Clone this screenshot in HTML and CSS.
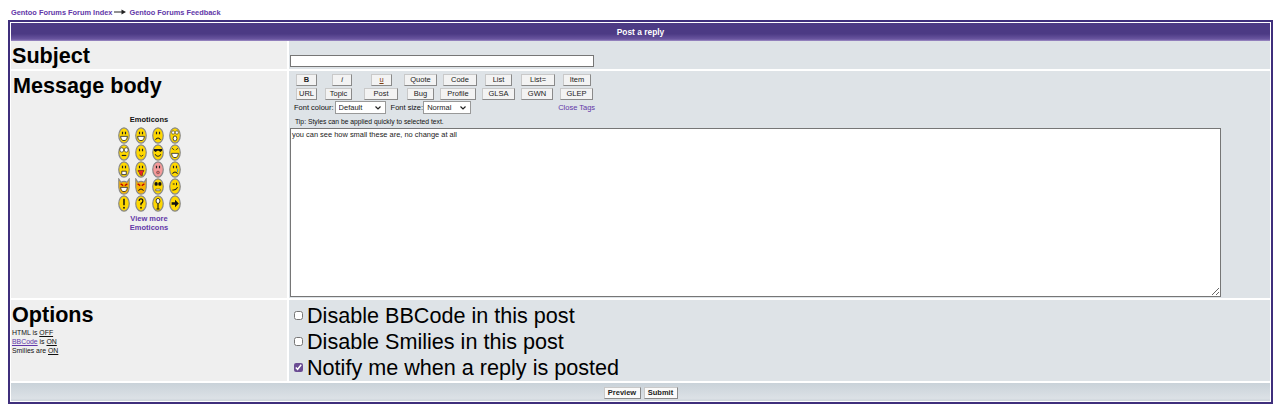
FILE: index.html
```html
<!DOCTYPE html>
<html lang="en">
<head>
<meta charset="UTF-8">
<title>Gentoo Forums :: Post a reply</title>
<link rel="stylesheet" href="styles.css">
</head>
<body>
<svg class="sprites" width="0" height="0">
    <symbol id="face" viewBox="0 0 16 20">
        <ellipse cx="8" cy="10" rx="7" ry="9" fill="#ffd800" stroke="#888" stroke-width="1.6"/>
    </symbol>
    <symbol id="pink" viewBox="0 0 16 20">
        <ellipse cx="8" cy="10" rx="7" ry="9" fill="#f49a9a" stroke="#888" stroke-width="1.6"/>
    </symbol>
    <symbol id="devil" viewBox="0 0 16 20">
        <path d="M1 1 L4 5 Q8 3 12 5 L15 1 L15 11 Q14 19 8 19 Q2 19 1 11 Z" fill="#f7b500" stroke="#888" stroke-width="1.4"/>
    </symbol>
    <symbol id="eyes" viewBox="0 0 16 20">
        <path d="M6 5.5 V8.5 M10 5.5 V8.5" stroke="#222" stroke-width="1.6"/>
    </symbol>
    <symbol id="grin" viewBox="0 0 16 20">
        <path d="M3.5 11 H12.5 Q12 16 8 16 Q4 16 3.5 11 Z" fill="#fff" stroke="#222"/>
    </symbol>
    <symbol id="sad" viewBox="0 0 16 20">
        <path d="M4.5 15 Q8 11 11.5 15" fill="none" stroke="#222" stroke-width="1.2"/>
    </symbol>
    <symbol id="smile" viewBox="0 0 16 20">
        <path d="M4 12 Q8 17 12 12" fill="none" stroke="#222" stroke-width="1.2"/>
    </symbol>
</svg>

<div class="crumbs">
    <a href="#">Gentoo Forums Forum Index</a>
    <svg class="crumb-arrow" width="12" height="6" viewBox="0 0 12 6"><path d="M0 3 H8" stroke="#222" stroke-width="1"/><path d="M7.5 0.5 L12 3 L7.5 5.5 Z" fill="#222"/></svg>
    <a href="#">Gentoo Forums Feedback</a>
</div>

<form class="forumline">
    <div class="title-bar">Post a reply</div>

    <div class="row row-subject">
        <div class="label-cell"><span class="big-label">Subject</span></div>
        <div class="field-cell subject-cell"><input class="subject-input" type="text"></div>
    </div>

    <div class="row row-message">
        <div class="label-cell">
            <span class="big-label">Message body</span>
            <div class="smilies">
                <div class="smilies-title">Emoticons</div>
                <div class="smilies-grid">
                    <svg viewBox="0 0 16 20" preserveAspectRatio="none"><use href="#face"/><use href="#eyes"/><use href="#grin"/></svg>
                    <svg viewBox="0 0 16 20" preserveAspectRatio="none"><use href="#face"/><use href="#eyes"/><use href="#grin"/></svg>
                    <svg viewBox="0 0 16 20" preserveAspectRatio="none"><use href="#face"/><use href="#eyes"/><use href="#sad"/></svg>
                    <svg viewBox="0 0 16 20" preserveAspectRatio="none"><use href="#face"/><circle cx="5.5" cy="6.5" r="2" fill="#fff" stroke="#222" stroke-width=".7"/><circle cx="10.5" cy="6.5" r="2" fill="#fff" stroke="#222" stroke-width=".7"/><ellipse cx="8" cy="13.5" rx="2.5" ry="3" fill="#fff" stroke="#222"/></svg>

                    <svg viewBox="0 0 16 20" preserveAspectRatio="none"><use href="#face"/><circle cx="5" cy="7" r="2.6" fill="#fff" stroke="#222" stroke-width=".8"/><circle cx="11" cy="7" r="2.6" fill="#fff" stroke="#222" stroke-width=".8"/><path d="M5 13.5 H11" stroke="#222" stroke-width="1.4"/></svg>
                    <svg viewBox="0 0 16 20" preserveAspectRatio="none"><use href="#face"/><use href="#eyes"/><path d="M6 13 Q8 16 11 13" fill="none" stroke="#222"/></svg>
                    <svg viewBox="0 0 16 20" preserveAspectRatio="none"><use href="#face"/><path d="M2.5 6 H13.5 V8 L11 9.5 L9 8 H7 L5 9.5 L2.5 8 Z" fill="#111"/><use href="#smile"/></svg>
                    <svg viewBox="0 0 16 20" preserveAspectRatio="none"><use href="#face"/><path d="M4 5 L7 7 M12 5 L9 7" stroke="#222"/><use href="#grin"/></svg>

                    <svg viewBox="0 0 16 20" preserveAspectRatio="none"><use href="#face"/><use href="#eyes"/><path d="M5 12 H11 V16 H5 Z" fill="#fff" stroke="#222"/></svg>
                    <svg viewBox="0 0 16 20" preserveAspectRatio="none"><use href="#face"/><use href="#eyes"/><path d="M4 11 H12 Q11 14 10 14 L10 17 Q8 18 6.5 16 L6 14 Q4 13 4 11 Z" fill="#e22" stroke="#222" stroke-width=".6"/></svg>
                    <svg viewBox="0 0 16 20" preserveAspectRatio="none"><use href="#pink"/><use href="#eyes"/><ellipse cx="8" cy="13.5" rx="2" ry="1.6" fill="#d66" stroke="#444" stroke-width=".6"/></svg>
                    <svg viewBox="0 0 16 20" preserveAspectRatio="none"><use href="#face"/><use href="#eyes"/><use href="#sad"/><path d="M11.5 9 V13" stroke="#39c" stroke-width="1.2"/></svg>

                    <svg viewBox="0 0 16 20" preserveAspectRatio="none"><use href="#devil"/><path d="M3.5 7 L7 9 M12.5 7 L9 9" stroke="#b00" stroke-width="1.6"/><use href="#grin"/></svg>
                    <svg viewBox="0 0 16 20" preserveAspectRatio="none"><use href="#devil"/><path d="M3.5 7 L7 9 M12.5 7 L9 9" stroke="#b00" stroke-width="1.6"/><use href="#sad"/></svg>
                    <svg viewBox="0 0 16 20" preserveAspectRatio="none"><use href="#face"/><circle cx="5.5" cy="7" r="2.2" fill="#111"/><circle cx="10.5" cy="7" r="2.2" fill="#111"/><path d="M5 13 H11 V15 H5 Z" fill="#fff" stroke="#222" stroke-width=".7"/></svg>
                    <svg viewBox="0 0 16 20" preserveAspectRatio="none"><use href="#face"/><path d="M5 7 H7.5 M10 5.5 V8.5" stroke="#222" stroke-width="1.3"/><path d="M4.5 14 Q9 15 11.5 11" fill="none" stroke="#222" stroke-width="1.2"/></svg>

                    <svg viewBox="0 0 16 20" preserveAspectRatio="none"><use href="#face"/><path d="M8 4.5 V12" stroke="#111" stroke-width="2"/><circle cx="8" cy="15" r="1.2" fill="#111"/></svg>
                    <svg viewBox="0 0 16 20" preserveAspectRatio="none"><use href="#face"/><path d="M5.5 7 Q5.5 4.5 8 4.5 Q10.5 4.5 10.5 7 Q10.5 9 8 10 V12" fill="none" stroke="#111" stroke-width="1.6"/><circle cx="8" cy="15" r="1.1" fill="#111"/></svg>
                    <svg viewBox="0 0 16 20" preserveAspectRatio="none"><use href="#face"/><path d="M8 10 V16 M6 16.5 H10" stroke="#111" stroke-width="1.4"/><ellipse cx="8" cy="7" rx="2.6" ry="3" fill="#fff" stroke="#111"/></svg>
                    <svg viewBox="0 0 16 20" preserveAspectRatio="none"><use href="#face"/><path d="M3.5 8.5 H8 V5.5 L13 10 L8 14.5 V11.5 H3.5 Z" fill="#111"/></svg>
                </div>
                <a class="more-link" href="#">View more<br>Emoticons</a>
            </div>
        </div>
        <div class="field-cell message-cell">
            <div class="tag-grid">
                <button class="tag w-21 bold" type="button">B</button>
                <button class="tag w-20 nudge-7 italic" type="button">i</button>
                <button class="tag w-21 nudge-7 under" type="button">u</button>
                <button class="tag w-33" type="button">Quote</button>
                <button class="tag w-34 nudge-3" type="button">Code</button>
                <button class="tag w-27 nudge-3" type="button">List</button>
                <button class="tag w-34" type="button">List=</button>
                <button class="tag w-28 nudge-3" type="button">Item</button>

                <button class="tag w-21" type="button">URL</button>
                <button class="tag w-27" type="button">Topic</button>
                <button class="tag w-34" type="button">Post</button>
                <button class="tag w-27 nudge-3" type="button">Bug</button>
                <button class="tag w-36" type="button">Profile</button>
                <button class="tag w-33" type="button">GLSA</button>
                <button class="tag w-32" type="button">GWN</button>
                <button class="tag w-33" type="button">GLEP</button>
            </div>
            <div class="font-row">
                <span>Font colour:</span>
                <select class="font-select colour-select"><option>Default</option></select>
                <span class="size-label">Font size:</span>
                <select class="font-select size-select"><option>Normal</option></select>
                <a class="close-tags" href="#">Close Tags</a>
            </div>
            <div class="tip">Tip: Styles can be applied quickly to selected text.</div>
            <textarea class="message-box">you can see how small these are, no change at all</textarea>
        </div>
    </div>

    <div class="row row-options">
        <div class="label-cell">
            <span class="big-label">Options</span>
            <div class="option-notes">
                HTML is <u>OFF</u><br>
                <a href="#">BBCode</a> is <u>ON</u><br>
                Smilies are <u>ON</u>
            </div>
        </div>
        <div class="field-cell options-cell">
            <label class="option"><input type="checkbox">Disable BBCode in this post</label>
            <label class="option"><input type="checkbox">Disable Smilies in this post</label>
            <label class="option"><input type="checkbox" checked>Notify me when a reply is posted</label>
        </div>
    </div>

    <div class="footer-bar">
        <button class="main-btn w-37" type="button">Preview</button>
        <button class="main-btn w-34" type="button">Submit</button>
    </div>
</form>
</body>
</html>
```
FILE: styles.css
```css
html, body {
    margin: 0;
    padding: 0;
    background: #fff;
    overflow: hidden;
}
body {
    font-family: "Liberation Sans", Arial, sans-serif;
    font-size: 7.5px;
    color: #111;
    padding: 0 7px 0 8px;
}
a {
    color: #6237a8;
}
.sprites {
    position: absolute;
}
.crumbs {
    height: 20px;
    display: flex;
    align-items: center;
    gap: 2px;
    padding: 4px 3px 0;
    box-sizing: border-box;
    font-size: 7.4px;
    font-weight: bold;
}
.crumbs a {
    text-decoration: none;
}
.crumb-arrow {
    margin-right: 1px;
}
.forumline {
    display: block;
    border: 2px solid #3f2f7c;
    background: #fff;
    padding: 1px;
    height: 384px;
    box-sizing: border-box;
}
.title-bar {
    height: 18px;
    line-height: 18px;
    text-align: center;
    color: #fff;
    font-weight: bold;
    font-size: 8.4px;
    background: linear-gradient(#4c3a84 0, #4c3a84 60%, #6a56a0 90%, #a08fc6 100%);
}
.row {
    display: grid;
    grid-template-columns: 276px 1fr;
    gap: 2px;
}
.row-subject {
    height: 28px;
}
.row-message {
    height: 227px;
    margin-top: 2px;
}
.row-options {
    height: 81px;
    margin-top: 2px;
}
.label-cell {
    background: #efefef;
    padding: 0 1px;
}
.field-cell {
    background: #dee3e7;
}
.big-label {
    display: block;
    font-size: 21.6px;
    font-weight: bold;
    line-height: 28px;
    padding-top: 1px;
    margin-bottom: -1px;
    color: #000;
}
.row-message .big-label {
    padding-left: 1px;
}
.subject-cell {
    padding: 14px 0 0 1px;
}
.subject-input {
    display: block;
    width: 304px;
    height: 12px;
    padding: 0;
    box-sizing: border-box;
    border: 1px solid #767676;
    background: #fff;
}

.smilies {
    margin-top: 16px;
    text-align: center;
}
.smilies-title {
    font-weight: bold;
    line-height: 9px;
    margin-bottom: 3px;
}
.smilies-grid {
    display: grid;
    grid-template-columns: repeat(4, 12px);
    grid-auto-rows: 17px;
    column-gap: 5px;
    justify-content: center;
}
.smilies-grid svg {
    width: 12px;
    height: 17px;
}
.more-link {
    display: block;
    font-weight: bold;
    line-height: 9px;
    text-decoration: none;
    margin-top: 2px;
}

.message-cell {
    padding: 3px 0 0 1px;
}
.tag-grid {
    display: grid;
    grid-template-columns: 29px 39px 40px 36px 42px 39px 39px 40px;
    grid-template-rows: 12px 12px;
    row-gap: 2px;
    padding-left: 6px;
}
.tag {
    justify-self: start;
    padding: 0;
    font-family: "Liberation Sans", Arial, sans-serif;
    font-size: 7.5px;
    line-height: 1;
    color: #222;
    background: #f3f3f3;
    border: 1px solid #c9c9c9;
    border-right-color: #8a8a8a;
    border-bottom-color: #8a8a8a;
    box-sizing: border-box;
}
.w-20 { width: 20px; }
.w-21 { width: 21px; }
.w-27 { width: 27px; }
.w-28 { width: 28px; }
.w-32 { width: 32px; }
.w-33 { width: 33px; }
.w-34 { width: 34px; }
.w-36 { width: 36px; }
.w-37 { width: 37px; }
.nudge-3 {
    margin-left: 3px;
}
.nudge-7 {
    margin-left: 7px;
}
.bold {
    font-weight: bold;
}
.italic {
    font-style: italic;
}
.under {
    text-decoration: underline;
    color: #7a3b10;
}
.font-row {
    display: flex;
    align-items: center;
    height: 13px;
    margin-top: 1px;
    padding-left: 4px;
    gap: 1px;
}
.font-select {
    appearance: none;
    height: 13px;
    padding: 0 0 0 3px;
    font-family: "Liberation Sans", Arial, sans-serif;
    font-size: 7.5px;
    color: #222;
    background: #fff url("data:image/svg+xml,%3Csvg xmlns='http://www.w3.org/2000/svg' width='6' height='4'%3E%3Cpath d='M.5.5 3 3 5.5.5' fill='none' stroke='%23222' stroke-width='1.2'/%3E%3C/svg%3E") no-repeat right 4px center;
    border: 1px solid #999;
    border-radius: 0;
}
.colour-select {
    width: 51px;
}
.size-select {
    width: 48px;
}
.size-label {
    margin-left: 4px;
    margin-right: -1px;
}
.close-tags {
    margin-left: 86px;
    text-decoration: none;
}
.tip {
    font-size: 6.75px;
    line-height: 9px;
    padding: 3px 0 0 5px;
    height: 14px;
    box-sizing: border-box;
}
.message-box {
    display: block;
    width: 931px;
    height: 169px;
    margin: 0;
    padding: 1px;
    box-sizing: border-box;
    font-family: "Liberation Sans", Arial, sans-serif;
    font-size: 7.45px;
    color: #222;
    border: 1px solid #767676;
    background: #fff;
}

.option-notes {
    font-size: 6.9px;
    line-height: 9px;
    margin-top: -1px;
}
.options-cell {
    display: flex;
    flex-direction: column;
    padding: 3px 0 0 5px;
}
.option {
    display: flex;
    align-items: center;
    height: 26px;
    font-size: 21.6px;
    color: #000;
}
.option input {
    width: 9px;
    height: 9px;
    margin: 0 4px 1px 0;
    accent-color: #6a4c93;
}

.footer-bar {
    height: 18px;
    margin-top: 2px;
    padding: 1px 0 0 0;
    box-sizing: border-box;
    display: flex;
    justify-content: center;
    align-items: center;
    gap: 3px;
    background: linear-gradient(#c9d2d9, #dce1e6 85%, #ccd4da);
}
.main-btn {
    height: 12px;
    padding: 0;
    font-family: "Liberation Sans", Arial, sans-serif;
    font-size: 7.5px;
    font-weight: bold;
    color: #222;
    background: #fafafa;
    border: 1px solid #c9c9c9;
    border-right-color: #8a8a8a;
    border-bottom-color: #8a8a8a;
    box-sizing: border-box;
}
```
